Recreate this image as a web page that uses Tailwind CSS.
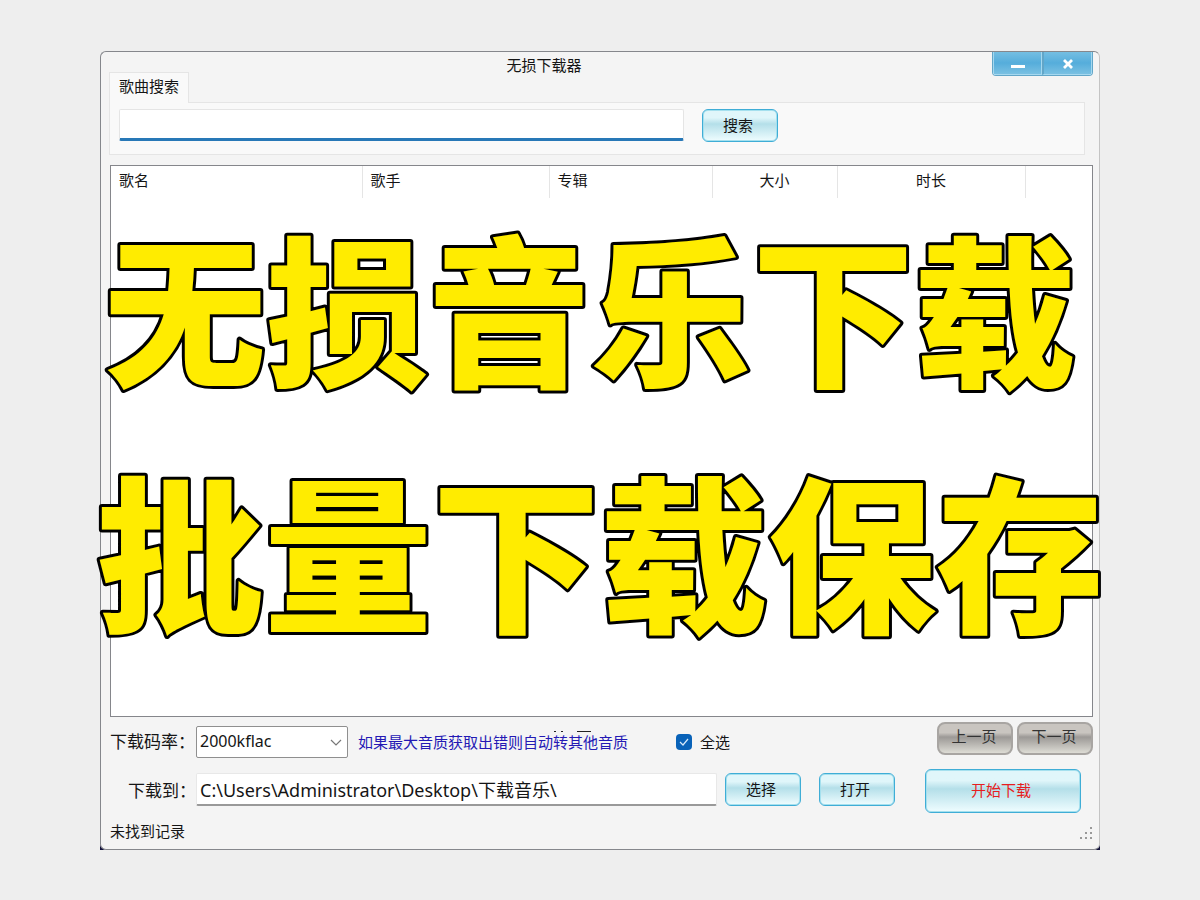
<!DOCTYPE html>
<html lang="zh-CN">
<head>
<meta charset="utf-8">
<meta name="viewport" content="width=device-width, initial-scale=1">
<title>无损下载器</title>
<script src="https://cdn.jsdelivr.net/npm/@tailwindcss/browser@4"></script>
</head>
<body class="flex min-h-screen justify-center bg-[#eeeeee] pt-[51px] pb-[50px] font-['Noto_Sans','Noto_Sans_CJK_SC',sans-serif] text-[15px] leading-5 text-[#151515]">
<main class="relative flex w-5/6 min-w-[960px] flex-col rounded-md border border-[#85878c] border-r-[#c4c4c4] bg-[#f4f4f4]">
  <!-- Dark window corners -->
  <svg class="absolute -bottom-px -left-px" width="5" height="5" viewBox="0 0 5 5"><path d="M0 0Q1 4 5 5H0z" fill="#14143c"/></svg>
  <svg class="absolute -bottom-px -right-px" width="5" height="5" viewBox="0 0 5 5"><path d="M5 0Q4 4 0 5h5z" fill="#14143c"/></svg>

  <!-- Title bar -->
  <header class="relative flex h-5 justify-center">
    <h1 class="pr-[112px] pt-[3px]">无损下载器</h1>
    <div class="absolute right-1.5 top-0 flex h-6 overflow-hidden rounded-b border border-t-0 border-[#62a6c8]">
      <button type="button" aria-label="最小化" class="flex w-[49px] items-center justify-center border border-t-0 border-[#a5d8ef] bg-linear-to-b from-[#74bee2] via-[#55addb] to-[#79c0e2]">
        <svg class="mt-1" width="14" height="8" viewBox="0 0 14 8"><path d="M0 4h14v3H0z" fill="#fff"/></svg>
      </button>
      <button type="button" aria-label="关闭" class="flex w-[50px] items-center justify-center border border-t-0 border-l-2 border-[#a5d8ef] border-l-[#62a6c8] bg-linear-to-b from-[#74bee2] via-[#55addb] to-[#79c0e2]">
        <svg class="mt-0.5" width="12" height="10" viewBox="0 0 12 10"><path d="M2 1l8 8M10 1L2 9" stroke="#fff" stroke-width="2.8"/></svg>
      </button>
    </div>
  </header>

  <!-- Search tab -->
  <section class="ml-2 mr-3.5">
    <div role="tablist" class="flex">
      <button type="button" role="tab" aria-selected="true" class="relative z-10 -mb-px h-[31px] w-20 border border-b-0 border-[#e5e5e5] bg-[#f9f9f9] pb-1">歌曲搜索</button>
    </div>
    <form class="flex h-[53px] items-start border border-[#e5e5e5] bg-[#f9f9f9] pl-[9px] pt-1.5" onsubmit="return false">
      <input type="text" aria-label="搜索" class="h-8 w-[565px] rounded-xs border border-b-3 border-[#e5e5e5] border-b-[#2878b7] bg-white px-1 outline-none">
      <button type="submit" class="ml-[18px] h-[33px] w-[76px] rounded-md border border-[#3fadd6] bg-linear-to-b from-[#e0f6fa] from-25% via-[#b4dfe9] via-45% to-[#effdff] pr-1 pb-0.5 shadow-[inset_0_0_0_1px_#a5e0ee]">搜索</button>
    </form>
  </section>

  <!-- Results -->
  <section class="ml-[9px] mr-1.5 mt-2.5 min-h-[480px] flex-1 border border-[#85868b] bg-white">
    <table class="w-full table-fixed border-collapse">
      <colgroup><col class="w-[251px]"><col class="w-[187px]"><col class="w-[163px]"><col class="w-[125px]"><col class="w-[188px]"><col></colgroup>
      <thead>
        <tr class="h-8">
          <th class="border-r border-[#e5e5e5] pb-1 pl-2 text-left font-normal">歌名</th>
          <th class="border-r border-[#e5e5e5] pb-1 pl-2 text-left font-normal">歌手</th>
          <th class="border-r border-[#e5e5e5] pb-1 pl-2 text-left font-normal">专辑</th>
          <th class="border-r border-[#e5e5e5] pb-1 font-normal">大小</th>
          <th class="border-r border-[#e5e5e5] pb-1 font-normal">时长</th>
          <td></td>
        </tr>
      </thead>
    </table>
  </section>

  <!-- Download settings -->
  <section class="ml-[9px] mr-1.5 mt-1">
    <div class="flex h-[42px] items-center">
      <label for="rate" class="w-[86px] text-[17px]">下载码率：</label>
      <div class="relative h-8 w-[152px]">
        <select id="rate" class="h-full w-full appearance-none rounded-xs border border-[#8f8f8f] bg-white pl-[3px] pb-0.5 text-[16px]"><option>2000kflac</option></select>
        <svg class="pointer-events-none absolute right-1.5 top-3" width="12" height="9" viewBox="0 0 12 9"><path d="M1 2l5 5 5-5" fill="none" stroke="#777" stroke-width="1.2"/></svg>
      </div>
      <p class="relative ml-2.5 text-[#2419b4]">如果最大音质获取出错则自动转其他音质
        <svg class="absolute -top-0.5 left-[196px]" width="40" height="4" viewBox="0 0 40 4" fill="#222"><path d="M0 1h2v1H0zM7 1h2v1H7zM23 1h14v1H23z"/></svg>
      </p>
      <label class="ml-12 flex items-center gap-2">
        <span class="relative flex">
          <input type="checkbox" checked class="size-4 appearance-none rounded bg-[#0862b8]">
          <svg class="pointer-events-none absolute left-0 top-0" width="16" height="16" viewBox="0 0 16 16"><path d="M4 8l3 3 5-6" fill="none" stroke="#d5e9fa" stroke-width="1.2"/></svg>
        </span>全选
      </label>
      <div class="mb-2 ml-auto flex gap-1">
        <button type="button" class="h-[33px] w-[76px] rounded-lg border-2 border-[#a8a5a2] bg-linear-to-b from-[#c9c5c0] from-30% via-[#9c9996] via-45% to-[#dddcd5] pr-0.5 pb-1 text-[#333]">上一页</button>
        <button type="button" class="h-[33px] w-[76px] rounded-lg border-2 border-[#a8a5a2] bg-linear-to-b from-[#c9c5c0] from-30% via-[#9c9996] via-45% to-[#dddcd5] pr-0.5 pb-1 text-[#333]">下一页</button>
      </div>
    </div>
    <div class="mr-3 mt-1.5 flex h-11 items-start">
      <label for="path" class="mt-3 w-[86px] text-right text-[17px]">下载到：</label>
      <input id="path" type="text" value="C:\Users\Administrator\Desktop\下载音乐\" class="mt-1 h-[33px] min-w-0 flex-1 rounded-xs border border-b-2 border-[#e8e8e8] border-b-[#999] bg-white pl-[3px] text-[18px] outline-none">
      <button type="button" class="ml-2 mt-1 h-[33px] w-[76px] rounded-md border border-[#3fadd6] bg-linear-to-b from-[#e0f6fa] from-25% via-[#b4dfe9] via-45% to-[#effdff] pr-1 pb-0.5 shadow-[inset_0_0_0_1px_#a5e0ee]">选择</button>
      <button type="button" class="ml-[18px] mt-1 h-[33px] w-[76px] rounded-md border border-[#3fadd6] bg-linear-to-b from-[#e0f6fa] from-25% via-[#b4dfe9] via-45% to-[#effdff] pr-1 pb-0.5 shadow-[inset_0_0_0_1px_#a5e0ee]">打开</button>
      <button type="button" class="ml-[30px] h-11 w-[156px] rounded-md border border-[#3fadd6] bg-linear-to-b from-[#e0f6fa] from-25% via-[#b4dfe9] via-45% to-[#effdff] pr-1 pb-0.5 text-[#e71d20] shadow-[inset_0_0_0_1px_#a5e0ee]">开始下载</button>
    </div>
  </section>
  <footer class="ml-[9px] mr-1.5 flex h-9 items-center justify-between">
    <p>未找到记录</p>
    <svg class="mt-1.5" width="14" height="14" viewBox="0 0 14 14" fill="#999"><path d="M11 0h2v2h-2zM6 5h2v2H6zM11 5h2v2h-2zM1 10h2v2H1zM6 10h2v2H6zM11 10h2v2h-2z"/></svg>
  </footer>

  <!-- Promotional lettering -->
  <svg class="pointer-events-none absolute inset-x-0 top-[136px] z-20 h-[488px] w-full overflow-visible fill-[#ffec00] stroke-black stroke-[6px] font-['Noto_Sans_CJK_SC',sans-serif] font-black [paint-order:stroke_fill] [stroke-linejoin:round]" text-anchor="middle">
    <text x="49%" y="187" class="text-[162px]">无损音乐下载</text>
    <text x="50%" y="432" class="text-[168px]">批量下载保存</text>
  </svg>
</main>
</body>
</html>
